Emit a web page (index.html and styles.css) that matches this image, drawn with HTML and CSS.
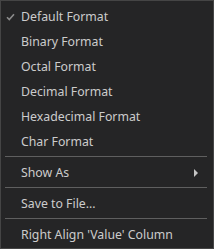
FILE: index.html
```html
<!DOCTYPE html>
<html lang="en">
<head>
    <meta charset="UTF-8">
    <title>Context menu</title>
    <link rel="stylesheet" href="styles.css">
</head>
<body>
    <div class="menu">
        <div class="item">
            <span class="check">
                <svg width="9" height="8" viewBox="0 0 9 8"><path d="M1 4.2 L3.3 6.5 L8 1.2" fill="none" stroke="#8b8b8b" stroke-width="1.6"/></svg>
            </span>
            <span class="label">Default Format</span>
        </div>
        <div class="item"><span class="check"></span><span class="label">Binary Format</span></div>
        <div class="item"><span class="check"></span><span class="label">Octal Format</span></div>
        <div class="item"><span class="check"></span><span class="label">Decimal Format</span></div>
        <div class="item"><span class="check"></span><span class="label">Hexadecimal Format</span></div>
        <div class="item"><span class="check"></span><span class="label">Char Format</span></div>
        <div class="sep"></div>
        <div class="item">
            <span class="check"></span><span class="label">Show As</span>
            <span class="arrow"></span>
        </div>
        <div class="sep"></div>
        <div class="item"><span class="check"></span><span class="label">Save to File...</span></div>
        <div class="sep"></div>
        <div class="item"><span class="check"></span><span class="label">Right Align 'Value' Column</span></div>
    </div>
</body>
</html>
```

FILE: styles.css
```css
body
{
    margin: 0;
    background: #252526;
}
.menu
{
    border: 1px solid #454545;
    background: #252526;
    padding: 3px 0 1px 0;
    box-sizing: border-box;
    height: 249px;
    width: 214px;
    font-family: "Noto Sans", "Open Sans", sans-serif;
    font-size: 12.3px;
    color: #cccccc;
}
.item
{
    height: 25px;
    display: flex;
    align-items: center;
}
.check
{
    width: 20px;
    display: flex;
    align-items: center;
    padding-left: 5px;
    box-sizing: border-box;
}
.label
{
    flex: 1;
    white-space: nowrap;
}
.arrow
{
    width: 0;
    height: 0;
    border-top: 4px solid transparent;
    border-bottom: 4px solid transparent;
    border-left: 4px solid #c5c5c5;
    margin-right: 15px;
}
.sep
{
    height: 1px;
    background: #5f5f5f;
    margin: 2px 6px 3px 4px;
}
```
